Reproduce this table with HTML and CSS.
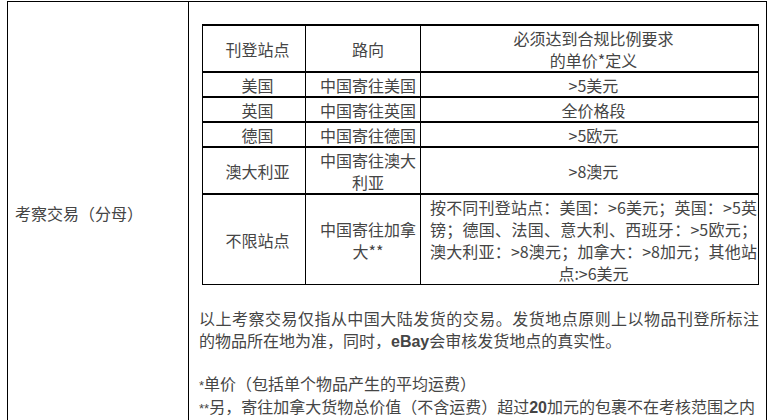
FILE: index.html
```html
<!DOCTYPE html>
<html lang="zh-CN">
<head>
<meta charset="utf-8">
<title>考察交易</title>
<link rel="stylesheet" href="styles.css">
</head>
<body>
<div class="sheet">
  <div class="label">考察交易（分母）</div>
  <div class="detail">
    <table class="rules">
      <colgroup><col class="c-site"><col class="c-route"><col class="c-price"></colgroup>
      <tr>
        <td class="site">刊登站点</td>
        <td class="route">路向</td>
        <td class="price">必须达到合规比例要求<br>的单价*定义</td>
      </tr>
      <tr>
        <td class="site">美国</td>
        <td class="route">中国寄往美国</td>
        <td class="price">&gt;5美元</td>
      </tr>
      <tr>
        <td class="site">英国</td>
        <td class="route">中国寄往英国</td>
        <td class="price">全价格段</td>
      </tr>
      <tr>
        <td class="site">德国</td>
        <td class="route">中国寄往德国</td>
        <td class="price">&gt;5欧元</td>
      </tr>
      <tr>
        <td class="site">澳大利亚</td>
        <td class="route">中国寄往澳大利亚</td>
        <td class="price">&gt;8澳元</td>
      </tr>
      <tr>
        <td class="site">不限站点</td>
        <td class="route">中国寄往加拿大**</td>
        <td class="price spread"><span class="ln">按不同刊登站点：美国：&gt;6美元；英国：&gt;5英</span><span class="ln">镑；德国、法国、意大利、西班牙：&gt;5欧元；</span><span class="ln">澳大利亚：&gt;8澳元；加拿大：&gt;8加元；其他站</span><span class="ln tail">点:&gt;6美元</span></td>
      </tr>
    </table>
    <p class="note"><span class="full">以上考察交易仅指从中国大陆发货的交易。发货地点原则上以物品刊登所标注</span>的物品所在地为准，同时，<b class="latin">eBay</b>会审核发货地点的真实性。</p>
    <p class="foot"><span class="star">*</span>单价（包括单个物品产生的平均运费）<br><span class="star">**</span>另，寄往加拿大货物总价值（不含运费）超过<b class="latin">20</b>加元的包裹不在考核范围之内</p>
  </div>
</div>
</body>
</html>
```
FILE: styles.css
```css
* {
  box-sizing: border-box;
}

body {
  margin: 0;
  background: #fff;
  font-family: "Noto Sans CJK SC", "Noto Sans", sans-serif;
  font-size: 16px;
  color: #454545;
}

.sheet {
  display: grid;
  grid-template-columns: 181px 1fr;
  width: 760px;
  margin: 1px 0 0 7px;
  border: 1px solid #000;
}

.label {
  display: flex;
  align-items: center;
  padding-left: 7px;
  border-right: 1px solid #000;
  line-height: 22px;
}

.detail {
  padding: 22px 8px 4px 10px;
  line-height: 22px;
}

.rules {
  width: 557px;
  margin-left: 3px;
  table-layout: fixed;
  border-collapse: separate;
  border-spacing: 0;
  border-right: 1px solid #000;
  border-bottom: 1px solid #000;
}

.c-site {
  width: 103px;
}

.c-route {
  width: 115px;
}

.c-price {
  width: 338px;
}

.rules td {
  border-top: 2px solid #000;
  border-left: 1px solid #000;
  padding: 1px 0 0;
  text-align: center;
  vertical-align: middle;
  line-height: 22px;
}

.rules td.site {
  padding-left: 7px;
}

.rules td.route {
  padding-left: 10px;
}

.rules td.price {
  padding-left: 9px;
  padding-right: 1px;
}

.spread .ln {
  display: block;
  white-space: nowrap;
  text-align: justify;
  text-align-last: justify;
}

.spread .ln.tail {
  text-align: center;
  text-align-last: center;
}

.note {
  margin: 22px 0 0;
}

.note .full {
  display: block;
  white-space: nowrap;
  text-align: justify;
  text-align-last: justify;
}

.foot {
  margin: 20px 0 0;
  line-height: 21px;
}

.latin {
  font-family: "Liberation Sans", Arial, sans-serif;
  font-weight: bold;
}

.star {
  font-family: "Liberation Sans", Arial, sans-serif;
  font-size: 13px;
}
```
